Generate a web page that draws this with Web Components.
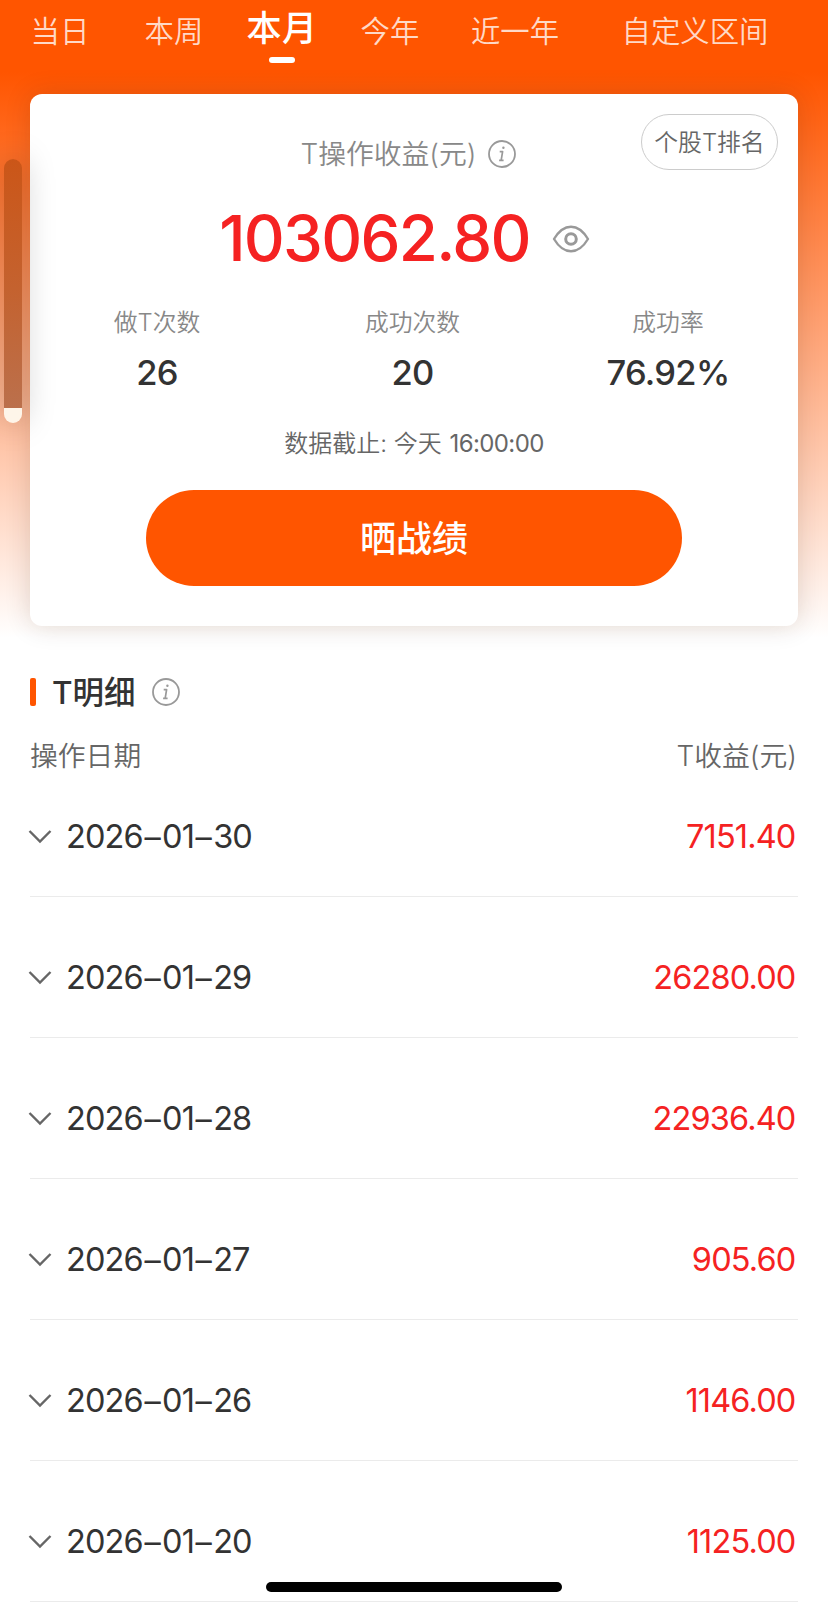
<!DOCTYPE html>
<html lang="zh-CN">
<head>
<meta charset="utf-8">
<title>T操作收益</title>
<style>
html,body{margin:0;padding:0;background:#fff}
body{font-family:Inter,"Noto Sans CJK SC",sans-serif;font-weight:350;color:#333}
</style>
</head>
<body>
<t-page></t-page>
<script>
function define(name, html) {
  const tpl = document.createElement('template');
  tpl.innerHTML = html;
  customElements.define(name, class extends HTMLElement {
    constructor() {
      super();
      this.attachShadow({mode: 'open'}).append(tpl.content.cloneNode(true));
    }
  });
}

define('info-icon', `
<style>:host{display:block;width:28px;height:28px;flex:none}svg{display:block}</style>
<svg width="28" height="28" viewBox="0 0 28 28" fill="none" stroke="#999" stroke-linecap="round" stroke-linejoin="round">
<circle cx="14" cy="14" r="13" stroke-width="1.800"/>
<path d="M11.700 11.600H14.600L13.200 20.200M11.100 20.400H15.600" stroke-width="1.700" stroke-linecap="butt"/>
<circle cx="15.400" cy="7.800" r="1.200" fill="#999" stroke="none"/></svg>`);

define('eye-icon', `
<style>:host{display:block;width:38px;height:30px;flex:none}svg{display:block}</style>
<svg width="38" height="30" viewBox="0 0 38 30" fill="none" stroke="#999" stroke-width="2.400" stroke-linejoin="round">
<path d="M2 15C6.500 7.500 12.500 2.700 19 2.700S31.500 7.500 36 15C31.500 22.500 25.500 27.300 19 27.300S6.500 22.500 2 15Z"/>
<circle cx="19" cy="15" r="5.300" stroke-width="3"/></svg>`);

define('period-tab', `
<style>
:host{display:flex;flex-direction:column;align-items:center;flex:none;height:64px;color:rgba(255,255,255,.78);font-size:29.400px;line-height:64px;white-space:nowrap}
:host([active]){color:#fff;font-size:35px;font-weight:500;line-height:57px;letter-spacing:.5px}
i{display:none;width:26px;height:6px;border-radius:3px;background:#fff}
:host([active]) i{display:block}
</style><span><slot></slot></span><i></i>`);

define('period-tabs', `
<style>
:host{display:grid;grid-template-columns:60px 54px 60px 43px 70px 43px 60px 50px 90px 62px 146px;padding-left:30px;height:94px;box-sizing:border-box}
period-tab:nth-of-type(1){grid-column:1}period-tab:nth-of-type(2){grid-column:3}
period-tab:nth-of-type(3){grid-column:5}period-tab:nth-of-type(4){grid-column:7}
period-tab:nth-of-type(5){grid-column:9}period-tab:nth-of-type(6){grid-column:11}
</style>
<period-tab>当日</period-tab><period-tab>本周</period-tab><period-tab active>本月</period-tab><period-tab>今年</period-tab><period-tab>近一年</period-tab><period-tab>自定义区间</period-tab>`);

define('stat-item', `
<style>
:host{display:flex;flex-direction:column;align-items:center;width:255.500px}
.l{font-size:23.800px;line-height:36px;color:#888}
.v{font-size:34.500px;line-height:40px;font-weight:500;letter-spacing:-.7px;margin-top:12px}
</style><span class="l"><slot name="label"></slot></span><span class="v"><slot></slot></span>`);

define('profit-card', `
<style>
:host{display:flex;flex-direction:column;align-items:center;position:relative;margin:0 30px;height:532px;box-sizing:border-box;border-radius:12px;background:#fff;box-shadow:0 0 26px rgba(60,30,10,.16)}
.title{display:flex;align-items:center;gap:11px;margin:40px 0 0 -12px;height:40px;font-size:27.800px;color:#888}
.title span{line-height:42px}
.rank{position:absolute;top:20px;right:20px;width:137px;height:56px;box-sizing:border-box;border:1px solid #ccc;border-radius:28px;text-align:center;font-size:23.800px;line-height:56px;color:#666}
.total{display:flex;align-items:center;gap:22px;margin:24px 0 0 -19px;height:80px;font-size:63.500px;line-height:80px;font-weight:500;letter-spacing:-1.700px;color:#f52222}
.total eye-icon{margin-top:2px}
.stats{display:flex;margin:27px 0 0 -3px}
.time{margin-top:33px;font-size:24px;line-height:36px;color:#666;white-space:pre}
.time b{font-weight:400;letter-spacing:-.6px;margin-left:1px}
.share{margin-top:28px;width:536px;height:96px;border-radius:48px;background:#f50;color:#fff;font-size:36px;font-weight:500;line-height:98px;text-align:center}
</style>
<div class="title"><span>T操作收益(元)</span><info-icon></info-icon></div>
<div class="rank">个股T排名</div>
<div class="total"><span>103062.80</span><eye-icon></eye-icon></div>
<div class="stats">
<stat-item><span slot="label">做T次数</span>26</stat-item>
<stat-item><span slot="label">成功次数</span>20</stat-item>
<stat-item><span slot="label">成功率</span>76.92%</stat-item>
</div>
<div class="time">数据截止: 今天 <b>16:00:00</b></div>
<div class="share">晒战绩</div>`);

define('date-dash', `<style>:host{display:inline;margin:0 2.200px 0 1.500px;position:relative;top:1.500px}</style><slot></slot>`);

define('detail-row', `
<style>
:host{display:flex;align-items:center;height:141px;box-sizing:border-box;padding-top:21px;border-bottom:1px solid #ebebeb;font-size:32.500px;font-weight:400;line-height:40px;letter-spacing:-.85px}
svg{display:block;flex:none;margin-left:-2px}
.d{margin-left:14px;flex:1}
.a{color:#f52222;margin-right:2.500px}
</style>
<svg width="24" height="16" viewBox="0 0 24 16" fill="none" stroke="#666" stroke-width="2.400"><path d="M1.500 2L12 12.500L22.500 2"/></svg>
<span class="d"><slot></slot></span><span class="a"><slot name="amount"></slot></span>`);

define('detail-list', `
<style>
:host{display:block;margin:41px 30px 0}
h2{display:flex;align-items:center;margin:0;height:50px;font-size:31.500px;font-weight:500}
h2 span{line-height:52px;padding-top:1px}
h2 i{width:6px;height:28px;border-radius:2px;background:#f50;margin-right:16px}
h2 info-icon{margin-left:16px}
.head{display:flex;justify-content:space-between;height:40px;margin:20px 1px 0 0;font-size:27.800px;line-height:39px;color:#666}
detail-row:first-of-type{height:120px;padding-top:0}
</style>
<h2><i></i><span>T明细</span><info-icon></info-icon></h2>
<div class="head"><span>操作日期</span><span>T收益(元)</span></div>
<detail-row>2026<date-dash>–</date-dash>01<date-dash>–</date-dash>30<span slot="amount">7151.40</span></detail-row>
<detail-row>2026<date-dash>–</date-dash>01<date-dash>–</date-dash>29<span slot="amount">26280.00</span></detail-row>
<detail-row>2026<date-dash>–</date-dash>01<date-dash>–</date-dash>28<span slot="amount">22936.40</span></detail-row>
<detail-row>2026<date-dash>–</date-dash>01<date-dash>–</date-dash>27<span slot="amount">905.60</span></detail-row>
<detail-row>2026<date-dash>–</date-dash>01<date-dash>–</date-dash>26<span slot="amount">1146.00</span></detail-row>
<detail-row>2026<date-dash>–</date-dash>01<date-dash>–</date-dash>20<span slot="amount">1125.00</span></detail-row>`);

define('side-handle', `
<style>:host{display:block;position:absolute;left:4px;top:159px;width:18px;height:264px;border-radius:9px;box-shadow:0 0 32px rgba(0,0,0,.26);background:linear-gradient(#cb5618,#c4622f 130px,#bb704c 249px,#fef5e9 249px)}</style>`);

define('home-indicator', `
<style>:host{display:block;position:absolute;left:266px;top:1582px;width:296px;height:10px;border-radius:5px;background:#000}</style>`);

define('t-page', `
<style>:host{display:block;position:relative;width:828px;height:1608px;overflow:hidden;background:linear-gradient(#f50 72px,#fff 638px)}</style>
<period-tabs></period-tabs><profit-card></profit-card><detail-list></detail-list><side-handle></side-handle><home-indicator></home-indicator>`);
</script>
</body>
</html>
